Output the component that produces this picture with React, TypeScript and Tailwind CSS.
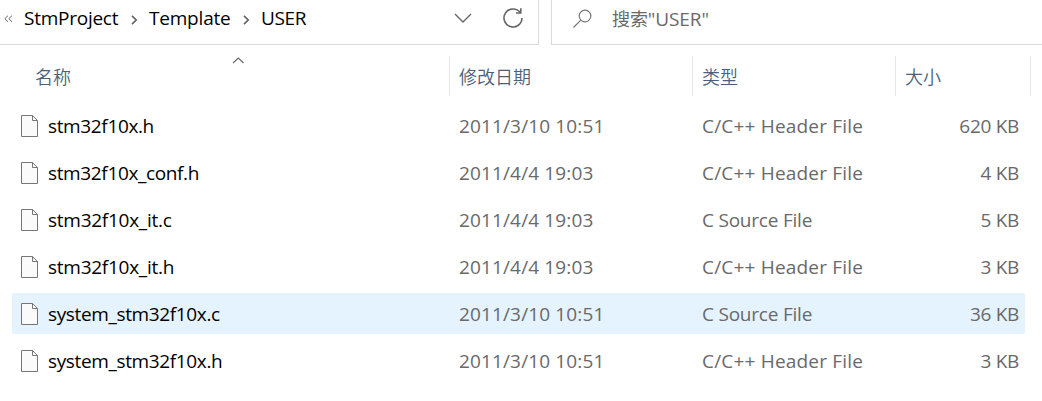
type FileRow = {
  name: string;
  date: string;
  type: string;
  size: string;
  selected?: boolean;
};

const files: FileRow[] = [
  { name: "stm32f10x.h", date: "2011/3/10 10:51", type: "C/C++ Header File", size: "620 KB" },
  { name: "stm32f10x_conf.h", date: "2011/4/4 19:03", type: "C/C++ Header File", size: "4 KB" },
  { name: "stm32f10x_it.c", date: "2011/4/4 19:03", type: "C Source File", size: "5 KB" },
  { name: "stm32f10x_it.h", date: "2011/4/4 19:03", type: "C/C++ Header File", size: "3 KB" },
  { name: "system_stm32f10x.c", date: "2011/3/10 10:51", type: "C Source File", size: "36 KB", selected: true },
  { name: "system_stm32f10x.h", date: "2011/3/10 10:51", type: "C/C++ Header File", size: "3 KB" },
];

function FileIcon() {
  return (
    <svg width="18" height="23" viewBox="0 0 18 23" className="mt-[1px] shrink-0" fill="none">
      <path d="M0.5 0.5H11.5L16.5 5.5V21.5H0.5Z" fill="#fafafa" stroke="#767676" />
      <path d="M11.5 0.5V5.5H16.5" stroke="#767676" />
    </svg>
  );
}

function Separator() {
  return (
    <svg width="7" height="10" viewBox="0 0 7 10" fill="none" className="mt-[4px] shrink-0">
      <path d="M1 0.8L5.2 5L1 9.2" stroke="#666" strokeWidth="1.7" />
    </svg>
  );
}

function Toolbar() {
  return (
    <div className="flex h-[45px] text-[19px] leading-[36px] text-black">
      <div className="flex w-[539px] border-r border-b border-[#d9d9d9]">
        <svg width="9" height="8" viewBox="0 0 9 8" fill="none" className="mt-[15px] ml-1 shrink-0">
          <path d="M4 0.7L0.8 3.7L4 6.7M8 0.7L4.8 3.7L8 6.7" stroke="#666" strokeWidth="1" />
        </svg>
        <div className="ml-[11px] flex h-[35px] w-[425px] items-center font-[380]">
          <span className="w-[107px] tracking-[-0.25px] whitespace-nowrap">StmProject</span>
          <Separator />
          <span className="ml-[11px] w-[94px] tracking-[-0.2px] whitespace-nowrap">Template</span>
          <Separator />
          <span className="ml-[11px] tracking-[-0.4px] whitespace-nowrap">USER</span>
        </div>
        <svg width="18" height="11" viewBox="0 0 18 11" fill="none" className="mt-[13px] ml-[5px] shrink-0">
          <path d="M1 1L9 9L17 1" stroke="#666" strokeWidth="1.4" />
        </svg>
        <svg width="22" height="22" viewBox="0 0 22 22" fill="none" className="mt-[7px] ml-[30px] shrink-0">
          <path d="M18.2 5.6A9 9 0 1 0 20 11" stroke="#666" strokeWidth="1.6" />
          <path d="M18.8 1.2V6H14" stroke="#666" strokeWidth="1.6" />
        </svg>
      </div>
      <div className="ml-3 flex grow border-b border-l border-[#d9d9d9]">
        <svg width="20" height="20" viewBox="0 0 20 20" fill="none" className="mt-[9px] ml-[20px] shrink-0">
          <circle cx="13" cy="7" r="5.8" stroke="#777" strokeWidth="1.2" />
          <path d="M8.8 11.2L1.5 18.5" stroke="#777" strokeWidth="1.2" />
        </svg>
        <span className="ml-5 pt-[1px] font-[370] tracking-[-0.1px] whitespace-nowrap text-[#696969]">
          <span className="text-[18px]">搜索</span>"USER"
        </span>
      </div>
    </div>
  );
}

function Header() {
  return (
    <div className="mt-[11px] flex h-10 w-[1031px] text-[18px] leading-[42px] font-[350] text-[#4c607a]">
      <div className="flex w-[450px] border-r border-[#e5e5e5] pl-[35px]">
        <span className="w-[197px]">名称</span>
        <svg width="12" height="7" viewBox="0 0 12 7" fill="none" className="mt-[1px]">
          <path d="M1 6L6.3 1L11.5 6" stroke="#666" strokeWidth="1.1" />
        </svg>
      </div>
      <div className="w-[243px] border-r border-[#e5e5e5] pl-[9px]">修改日期</div>
      <div className="w-[203px] border-r border-[#e5e5e5] pl-[9px]">类型</div>
      <div className="grow border-r border-[#e5e5e5] pl-[9px]">大小</div>
    </div>
  );
}

export default function App() {
  return (
    <main className="h-[401px] w-[1042px] overflow-hidden bg-white font-['Open_Sans','Noto_Sans_CJK_SC',sans-serif]">
      <Toolbar />
      <Header />
      <div className="mt-[9px] ml-3 flex w-[1013px] flex-col gap-[6px] text-[19px] leading-[41px] text-[#696969]">
        {files.map((f) => (
          <div key={f.name} className={`flex h-[41px] items-center rounded-[2px] whitespace-nowrap ${f.selected ? "bg-[#e5f3ff]" : ""}`}>
            <div className="flex w-[447px] items-center pl-[9px]">
              <FileIcon />
              <span className={`ml-[9px] pt-[2px] font-[390] text-black ${f.name.includes("_it") ? "tracking-[-0.26px]" : "tracking-[-0.36px]"}`}>{f.name}</span>
            </div>
            <span className="w-[243px] pt-[2px] font-[370] tracking-[0.14px]">{f.date}</span>
            <span className={`w-[203px] pt-[2px] font-[370] ${f.type === "C Source File" ? "tracking-[-0.22px]" : "tracking-[0.19px]"}`}>{f.type}</span>
            <span className="grow pt-[2px] pr-[6px] text-right font-[370] tracking-[-0.3px]">{f.size}</span>
          </div>
        ))}
      </div>
    </main>
  );
}
